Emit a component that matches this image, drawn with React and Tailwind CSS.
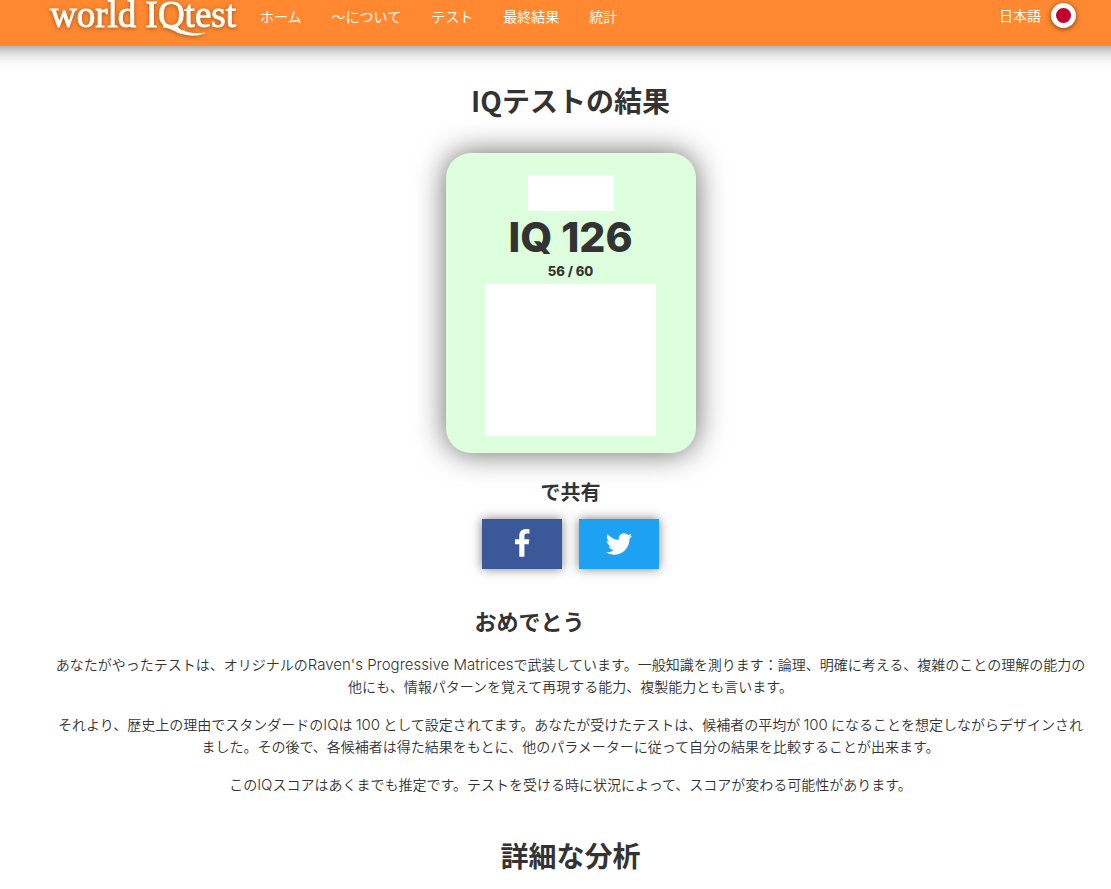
const navItems = ["ホーム", "～について", "テスト", "最終結果", "統計"];

const shareLinks = [
  {
    name: "Facebook",
    color: "bg-[#3b5998]",
    path: "M1343 12v264h-157q-86 0-116 36t-30 108v189h293l-39 296h-254v759h-306v-759h-255v-296h255v-218q0-186 104-288.500t277-102.500q147 0 228 12z",
  },
  {
    name: "Twitter",
    color: "bg-[#1da1f2]",
    path: "M1684 408q-67 98-162 167 1 14 1 42 0 130-38 259.500t-115.500 248.500-184.500 210.500-258 146-323 54.500q-271 0-496-145 35 4 78 4 225 0 401-138-105-2-188-64.500t-114-159.500q33 5 61 5 43 0 85-11-112-23-185.500-111.500t-73.500-205.500v-4q68 38 146 41-66-44-105-115t-39-154q0-88 44-163 121 149 294.500 238.500t371.500 99.500q-8-38-8-74 0-134 94.500-228.500t228.500-94.500q140 0 236 102 109-21 205-78-37 115-142 178 93-10 186-50z",
  },
];

function Logo() {
  return (
    <svg
      width="200"
      height="42"
      viewBox="0 0 200 42"
      role="img"
      aria-label="world IQtest"
      className="shrink-0 drop-shadow-[0_1px_2px_rgba(70,30,0,0.5)]"
    >
      <g fill="#fffdf5" stroke="#fffdf5" strokeWidth="0.9">
        <text x="5" y="27" fontSize="37" className="font-['Liberation_Serif',serif]">
          world IQtest
        </text>
        <path
          stroke="none"
          d="M118 24 C124 24 129 27 135 29.5 C143 32.800 151 34 160.500 32.500 C157 35.600 147 36.600 139 34.600 C131 32.600 127 28.500 118 27.500Z"
        />
      </g>
    </svg>
  );
}

function Header() {
  return (
    <header className="-mx-5 flex h-[46px] items-start justify-between bg-[#ff8831] pl-[65px] pr-[55px] text-sm leading-[21px] text-[#fffaf0] shadow-[0_0_20px_rgba(0,0,0,0.6)]">
      <div className="flex items-start">
        <a href="#home">
          <Logo />
        </a>
        <nav className="ml-[15px] flex gap-[30px] pt-[6px]">
          {navItems.map((item) => (
            <a key={item} href="#nav" className="whitespace-nowrap">
              {item}
            </a>
          ))}
        </nav>
      </div>
      <button type="button" className="flex items-center gap-[10px] pt-[3px]">
        <span className="whitespace-nowrap">日本語</span>
        <span className="flex size-[25px] items-center justify-center rounded-full bg-white shadow-[0_1px_5px_rgba(60,20,0,0.7)]">
          <span className="size-[15px] rounded-full bg-[#c00030]" />
        </span>
      </button>
    </header>
  );
}

function Latin({ children }) {
  return <span className="font-['Inter',sans-serif] text-[15px] leading-none font-light">{children}</span>;
}

function ResultCard() {
  return (
    <section className="mx-auto mt-[34px] flex h-[300px] w-[250px] flex-col items-center rounded-[25px] bg-[#ddffdd] pt-[22px] font-['Inter',sans-serif] shadow-[0_0_30px_rgba(0,0,0,0.6)]">
      <div className="h-9 w-[86px] bg-white" />
      <p className="text-[41px] leading-[52px] font-extrabold">IQ 126</p>
      <p className="text-[13px] leading-[16px] font-extrabold">56 / 60</p>
      <div className="mt-[5px] h-[152px] w-[171px] bg-white" />
    </section>
  );
}

export default function App() {
  return (
    <div className="min-h-screen overflow-x-clip bg-white font-['Noto_Sans_CJK_JP',sans-serif] text-[#333]">
      <Header />
      <main className="pl-[45px] pr-[15px] pb-4 text-center">
        <h1 className="pt-[35px] text-[28px] leading-[38px] font-bold">IQテストの結果</h1>
        <ResultCard />
        <h2 className="mt-[24px] text-xl leading-[30px] font-bold">で共有</h2>
        <div className="mt-[12px] flex justify-center gap-[17px]">
          {shareLinks.map(({ name, color, path }) => (
            <button
              key={name}
              type="button"
              aria-label={name}
              className={`flex h-[50px] w-20 items-center justify-center text-white shadow-[0_0_10px_rgba(0,0,0,0.5)] ${color}`}
            >
              <svg width="30" height="30" viewBox="0 0 1792 1792" fill="currentColor" aria-hidden="true">
                <path d={path} />
              </svg>
            </button>
          ))}
        </div>
        <h2 className="mt-[36px] pr-[82px] text-[22px] leading-[30px] font-bold">おめでとう</h2>
        <div className="mt-[18px] flex flex-col gap-4 px-2 text-sm leading-[22px] font-[350]">
          <p>
            あなたがやったテストは、オリジナルの<Latin>Raven's Progressive Matrices</Latin>
            で武装しています。一般知識を測ります：論理、明確に考える、複雑のことの理解の能力の他にも、情報パターンを覚えて再現する能力、複製能力とも言います。
          </p>
          <p>
            それより、歴史上の理由でスタンダードの<Latin>IQ</Latin>は <Latin>100</Latin>{" "}
            として設定されてます。あなたが受けたテストは、候補者の平均が <Latin>100</Latin>{" "}
            になることを想定しながらデザインされました。その後で、各候補者は得た結果をもとに、他のパラメーターに従って自分の結果を比較することが出来ます。
          </p>
          <p>
            この<Latin>IQ</Latin>スコアはあくまでも推定です。テストを受ける時に状況によって、スコアが変わる可能性があります。
          </p>
        </div>
        <h1 className="mt-[41px] text-[28px] leading-[38px] font-bold">詳細な分析</h1>
      </main>
    </div>
  );
}
